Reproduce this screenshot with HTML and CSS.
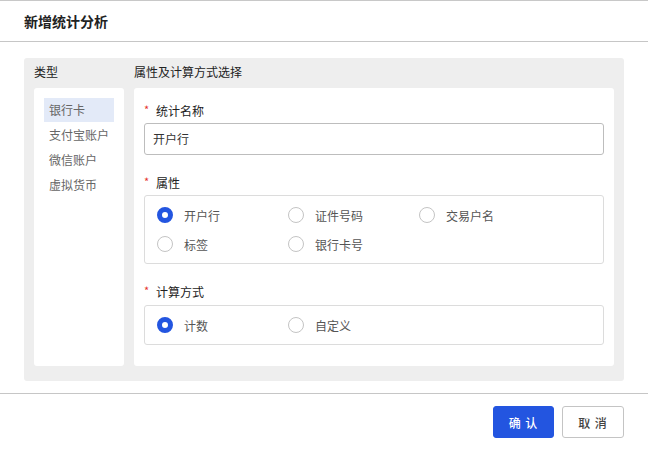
FILE: index.html
```html
<!DOCTYPE html>
<html lang="zh">
<head>
<meta charset="utf-8">
<link rel="stylesheet" href="styles.css">
</head>
<body>
<div class="modal">
  <div class="modal-header">新增统计分析</div>
  <div class="modal-body">
    <div class="panel">
      <div class="col col-type">
        <div class="col-title">类型</div>
        <div class="card type-list">
          <div class="type-item active">银行卡</div>
          <div class="type-item">支付宝账户</div>
          <div class="type-item">微信账户</div>
          <div class="type-item">虚拟货币</div>
        </div>
      </div>
      <div class="col col-form">
        <div class="col-title">属性及计算方式选择</div>
        <div class="card form">
          <div class="label"><span class="req">*</span>统计名称</div>
          <div class="input">开户行</div>
          <div class="label gap"><span class="req">*</span>属性</div>
          <div class="radio-box">
            <div class="radio-grid">
              <div class="radio checked"><span class="dot"></span>开户行</div>
              <div class="radio"><span class="dot"></span>证件号码</div>
              <div class="radio"><span class="dot"></span>交易户名</div>
              <div class="radio"><span class="dot"></span>标签</div>
              <div class="radio"><span class="dot"></span>银行卡号</div>
            </div>
          </div>
          <div class="label gap tall"><span class="req">*</span>计算方式</div>
          <div class="radio-box">
            <div class="radio-grid">
              <div class="radio checked"><span class="dot"></span>计数</div>
              <div class="radio"><span class="dot"></span>自定义</div>
            </div>
          </div>
        </div>
      </div>
    </div>
  </div>
  <div class="modal-footer">
    <button class="btn btn-primary">确 认</button>
    <button class="btn btn-default">取 消</button>
  </div>
</div>
</body>
</html>
```
FILE: styles.css
```css
* { box-sizing: border-box; }
html, body { margin: 0; padding: 0; background: #fff; }
body {
  font-family: "Noto Sans CJK SC", "Noto Sans", sans-serif;
  font-size: 12px;
  color: #333;
}
.modal {
  border-top: 1px solid #c8c8c8;
  width: 648px;
}
.modal-header {
  height: 41px;
  line-height: 40px;
  padding-left: 24px;
  font-size: 14px;
  font-weight: 700;
  color: #222;
  border-bottom: 1px solid #c6c6c6;
}
.modal-body {
  padding: 16px 24px 12px;
  border-bottom: 1px solid #c6c6c6;
}
.panel {
  background: #eeeeee;
  border-radius: 3px;
  padding: 0 10px 15px;
  display: flex;
  gap: 10px;
}
.col { display: flex; flex-direction: column; }
.col-type { width: 90px; }
.col-form { flex: 1; }
.col-title {
  height: 30px;
  line-height: 28px;
  color: #222;
}
.card {
  background: #fff;
  border-radius: 3px;
  flex: 1;
}
.type-list { padding: 10px; display: flex; flex-direction: column; gap: 1px; }
.type-item {
  height: 24px;
  line-height: 24px;
  padding-left: 5px;
  color: #666;
}
.type-item.active { background: #e3eaf8; }
.form { padding: 10px 10px 21px; }
.label {
  height: 25px;
  line-height: 24px;
  color: #222;
  display: flex;
  align-items: center;
}
.label.gap { margin-top: 15px; }
.label.tall { height: 26px; }
.req {
  color: #e5322d;
  width: 12px;
  font-size: 11px;
  line-height: 12px;
  align-self: center;
  margin-top: -4px;
}
.input {
  height: 32px;
  line-height: 30px;
  border: 1px solid #bdbdbd;
  border-radius: 3px;
  padding-left: 8px;
  color: #333;
}
.radio-box {
  border: 1px solid #dcdcdc;
  border-radius: 3px;
  padding: 7px 12px;
}
.radio-grid {
  display: grid;
  grid-template-columns: repeat(3, 131px);
  row-gap: 5px;
}
.radio {
  height: 24px;
  display: flex;
  align-items: center;
  color: #555;
}
.dot {
  width: 16px;
  height: 16px;
  border-radius: 50%;
  border: 1px solid #c4c4c4;
  margin-right: 11px;
  background: #fff;
  flex: none;
}
.radio.checked .dot {
  border: 5px solid #2355e0;
  background: #fff;
}
.modal-footer {
  display: flex;
  justify-content: flex-end;
  gap: 8px;
  padding: 12px 24px 0;
}
.btn {
  height: 32px;
  width: 61px;
  border-radius: 3px;
  font-family: "Noto Sans CJK SC", sans-serif;
  font-size: 12px;
  font-weight: 500;
  letter-spacing: 1px;
  cursor: pointer;
}
.btn-primary {
  background: #2355e0;
  border: 1px solid #2355e0;
  color: #fff;
}
.btn-default {
  width: 62px;
  background: #fff;
  border: 1px solid #c4c4c4;
  color: #444;
}
```
